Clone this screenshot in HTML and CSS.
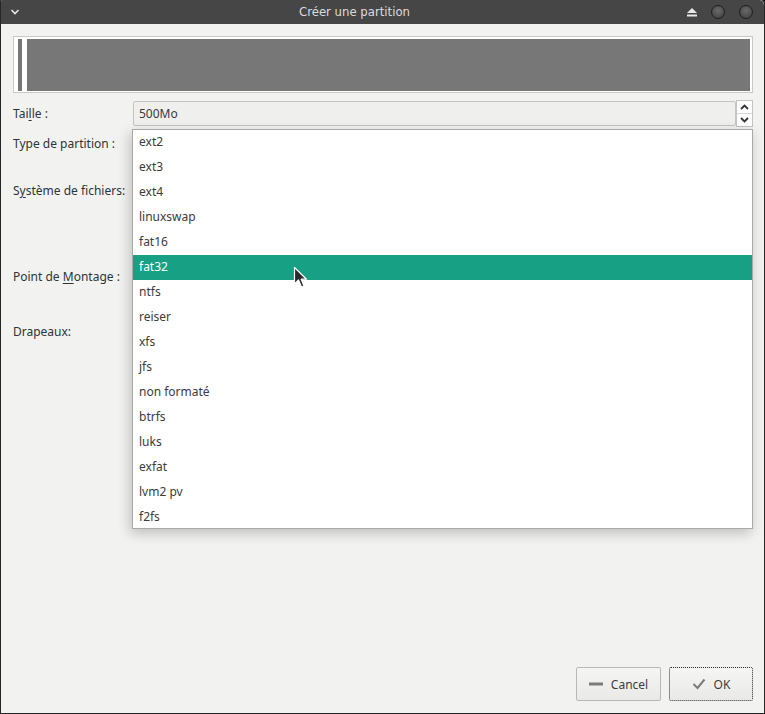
FILE: index.html
```html
<!DOCTYPE html>
<html lang="fr">
<head>
<meta charset="utf-8">
<title>Créer une partition</title>
<link rel="stylesheet" href="styles.css">
</head>
<body>
<div class="window">
  <header class="titlebar">
    <span class="tb-menu">
      <svg width="10" height="8" viewBox="0 0 10 8"><path d="M1.5 2 L5 5.5 L8.5 2" fill="none" stroke="#e6e6e6" stroke-width="1.6"/></svg>
    </span>
    <span class="tb-title">Créer une partition</span>
    <span class="tb-controls">
      <svg class="tb-eject" width="12" height="10" viewBox="0 0 12 10"><path d="M6 1 L11 6 H1 Z" fill="#e8e8e8"/><rect x="1" y="7.5" width="10" height="2" fill="#e8e8e8"/></svg>
      <span class="tb-dot"></span>
      <span class="tb-dot"></span>
    </span>
  </header>

  <main class="content">
    <div class="partbar">
      <div class="pb-inner">
        <span class="pb-stripe"></span>
        <span class="pb-fill"></span>
      </div>
    </div>

    <div class="form">
      <div class="row row-size">
        <label class="lbl">Tai<u>l</u>le :</label>
        <div class="spin">
          <div class="spin-entry">500Mo</div>
          <div class="spin-btns">
            <span class="sb"><svg width="9" height="6" viewBox="0 0 9 6"><path d="M1 5 L4.5 1.5 L8 5" fill="none" stroke="#333" stroke-width="1.8"/></svg></span>
            <span class="sb"><svg width="9" height="6" viewBox="0 0 9 6"><path d="M1 1 L4.5 4.5 L8 1" fill="none" stroke="#333" stroke-width="1.8"/></svg></span>
          </div>
        </div>
      </div>
      <div class="row row-type"><label class="lbl">Type de partition :</label></div>
      <div class="row row-fs"><label class="lbl">S<u>y</u>stème de fichiers:</label></div>
      <div class="row row-mount"><label class="lbl">Point de <u>M</u>ontage :</label></div>
      <div class="row row-flags"><label class="lbl">Drapeaux:</label></div>
    </div>

    <div class="spacer"></div>

    <footer class="actions">
      <button class="btn btn-cancel">
        <svg width="14" height="4" viewBox="0 0 14 4"><rect x="0" y="0.5" width="14" height="3" fill="#7b7b7b"/></svg>
        Cancel
      </button>
      <button class="btn btn-ok">
        <svg width="14" height="12" viewBox="0 0 14 12"><path d="M1.5 6 L5.5 10 L12.5 1.5" fill="none" stroke="#7b7b7b" stroke-width="2"/></svg>
        OK
      </button>
    </footer>
  </main>

  <ul class="popup">
    <li>ext2</li>
    <li>ext3</li>
    <li>ext4</li>
    <li>linuxswap</li>
    <li>fat16</li>
    <li class="sel">fat32</li>
    <li>ntfs</li>
    <li>reiser</li>
    <li>xfs</li>
    <li>jfs</li>
    <li>non formaté</li>
    <li>btrfs</li>
    <li>luks</li>
    <li>exfat</li>
    <li>lvm2 pv</li>
    <li>f2fs</li>
  </ul>

  <svg class="cursor" width="16" height="24" viewBox="0 0 16 24">
    <path d="M1.5 1.5 L1.5 18 L5.5 14 L8.5 21 L11 20 L8.2 13.2 L13.5 13.2 Z" fill="#2b2b2b" stroke="#ffffff" stroke-width="1.2" stroke-linejoin="round"/>
  </svg>
</div>
</body>
</html>
```

FILE: styles.css
```css
* { box-sizing: border-box; }

html, body {
  margin: 0;
  padding: 0;
  background: #1e1e1e;
}

.window {
  position: relative;
  width: 765px;
  height: 714px;
  background: #f2f3f1;
  border-left: 1px solid #262626;
  border-right: 1px solid #262626;
  border-bottom: 1px solid #262626;
  border-top-right-radius: 5px;
  border-top-left-radius: 2px;
  display: flex;
  flex-direction: column;
  font-family: "Noto Sans", "Open Sans", sans-serif;
  font-size: 12px;
  color: #2e3436;
  overflow: hidden;
}

.titlebar {
  height: 24px;
  flex: 0 0 24px;
  background: #464646;
  display: flex;
  align-items: center;
  padding: 0 11px 0 9px;
  position: relative;
  border-top-right-radius: 5px;
}

.tb-menu { display: flex; align-items: center; }

.tb-title {
  position: absolute;
  left: 0;
  right: 56px;
  text-align: center;
  font-family: "DejaVu Sans Condensed", "DejaVu Sans", sans-serif;
  font-size: 13px;
  color: #dcdcdc;
  line-height: 24px;
  pointer-events: none;
}

.tb-controls {
  margin-left: auto;
  display: flex;
  align-items: center;
  gap: 14px;
}

.tb-eject { margin-right: -1px; }

.tb-dot {
  width: 14px;
  height: 14px;
  border-radius: 50%;
  background: radial-gradient(circle at 50% 40%, #6a6a6a 0%, #4a4a4a 70%);
  border: 1.5px solid #1f1f1f;
}

.content {
  flex: 1;
  display: flex;
  flex-direction: column;
  padding: 12px 11px 12px 12px;
}

.partbar {
  height: 57px;
  border: 1px solid #c9cac7;
  padding: 2px 2px 1px 2px;
  background: #ffffff;
}

.pb-inner {
  height: 100%;
  display: flex;
}

.pb-stripe {
  width: 4px;
  margin-left: 2px;
  background: #777777;
}

.pb-fill {
  flex: 1;
  margin-left: 5px;
  background: #777777;
}

.form {
  display: flex;
  flex-direction: column;
}

.row {
  display: flex;
  align-items: center;
  height: 24px;
}

.lbl {
  width: 120px;
  flex: 0 0 120px;
  white-space: nowrap;
  color: #2e3436;
}

.lbl u { text-decoration-thickness: 1px; text-underline-offset: 2px; }

.row-size { margin-top: 7px; height: 27px; }
.row-type { margin-top: 4px; }
.row-fs { margin-top: 23px; }
.row-mount { margin-top: 62px; }
.row-flags { margin-top: 31px; }

.spin {
  flex: 1;
  display: flex;
  height: 27px;
}

.spin-entry {
  flex: 1;
  margin-top: 1px;
  height: 25px;
  border: 1px solid #c4c5c2;
  border-radius: 2px;
  background: #eff0ed;
  padding-left: 5px;
  line-height: 23px;
  color: #3a3a3a;
}

.spin-btns {
  width: 17px;
  display: flex;
  flex-direction: column;
  border: 1px solid #c4c5c2;
  background: #ffffff;
}

.sb {
  flex: 1;
  display: flex;
  align-items: center;
  justify-content: center;
}

.sb + .sb { border-top: 1px solid #d8d8d6; }

.spacer { flex: 1; }

.actions {
  display: flex;
  justify-content: flex-end;
  gap: 8px;
}

.btn {
  height: 34px;
  border: 1px solid #b8b9b6;
  border-radius: 2px;
  background: linear-gradient(#f5f5f4, #e9e9e7);
  font-family: "Noto Sans", "Open Sans", sans-serif;
  font-size: 12px;
  color: #3c3c3c;
  display: flex;
  align-items: center;
  justify-content: center;
  gap: 8px;
  padding: 0;
}

.btn-cancel { width: 85px; }
.btn-ok { width: 84px; border: 1px dotted #2a2a2a; }

.popup {
  position: absolute;
  left: 131px;
  top: 129px;
  width: 621px;
  height: 400px;
  margin: 0;
  padding: 0;
  list-style: none;
  background: #ffffff;
  border: 1px solid #a9aaa7;
  box-shadow: -2px 4px 12px rgba(0, 0, 0, 0.22);
}

.popup li {
  height: 25px;
  line-height: 24px;
  padding-left: 6px;
  color: #3b3b3b;
}

.popup li.sel {
  background: #17a084;
  color: #ffffff;
}

.cursor {
  position: absolute;
  left: 292px;
  top: 266px;
}
```
